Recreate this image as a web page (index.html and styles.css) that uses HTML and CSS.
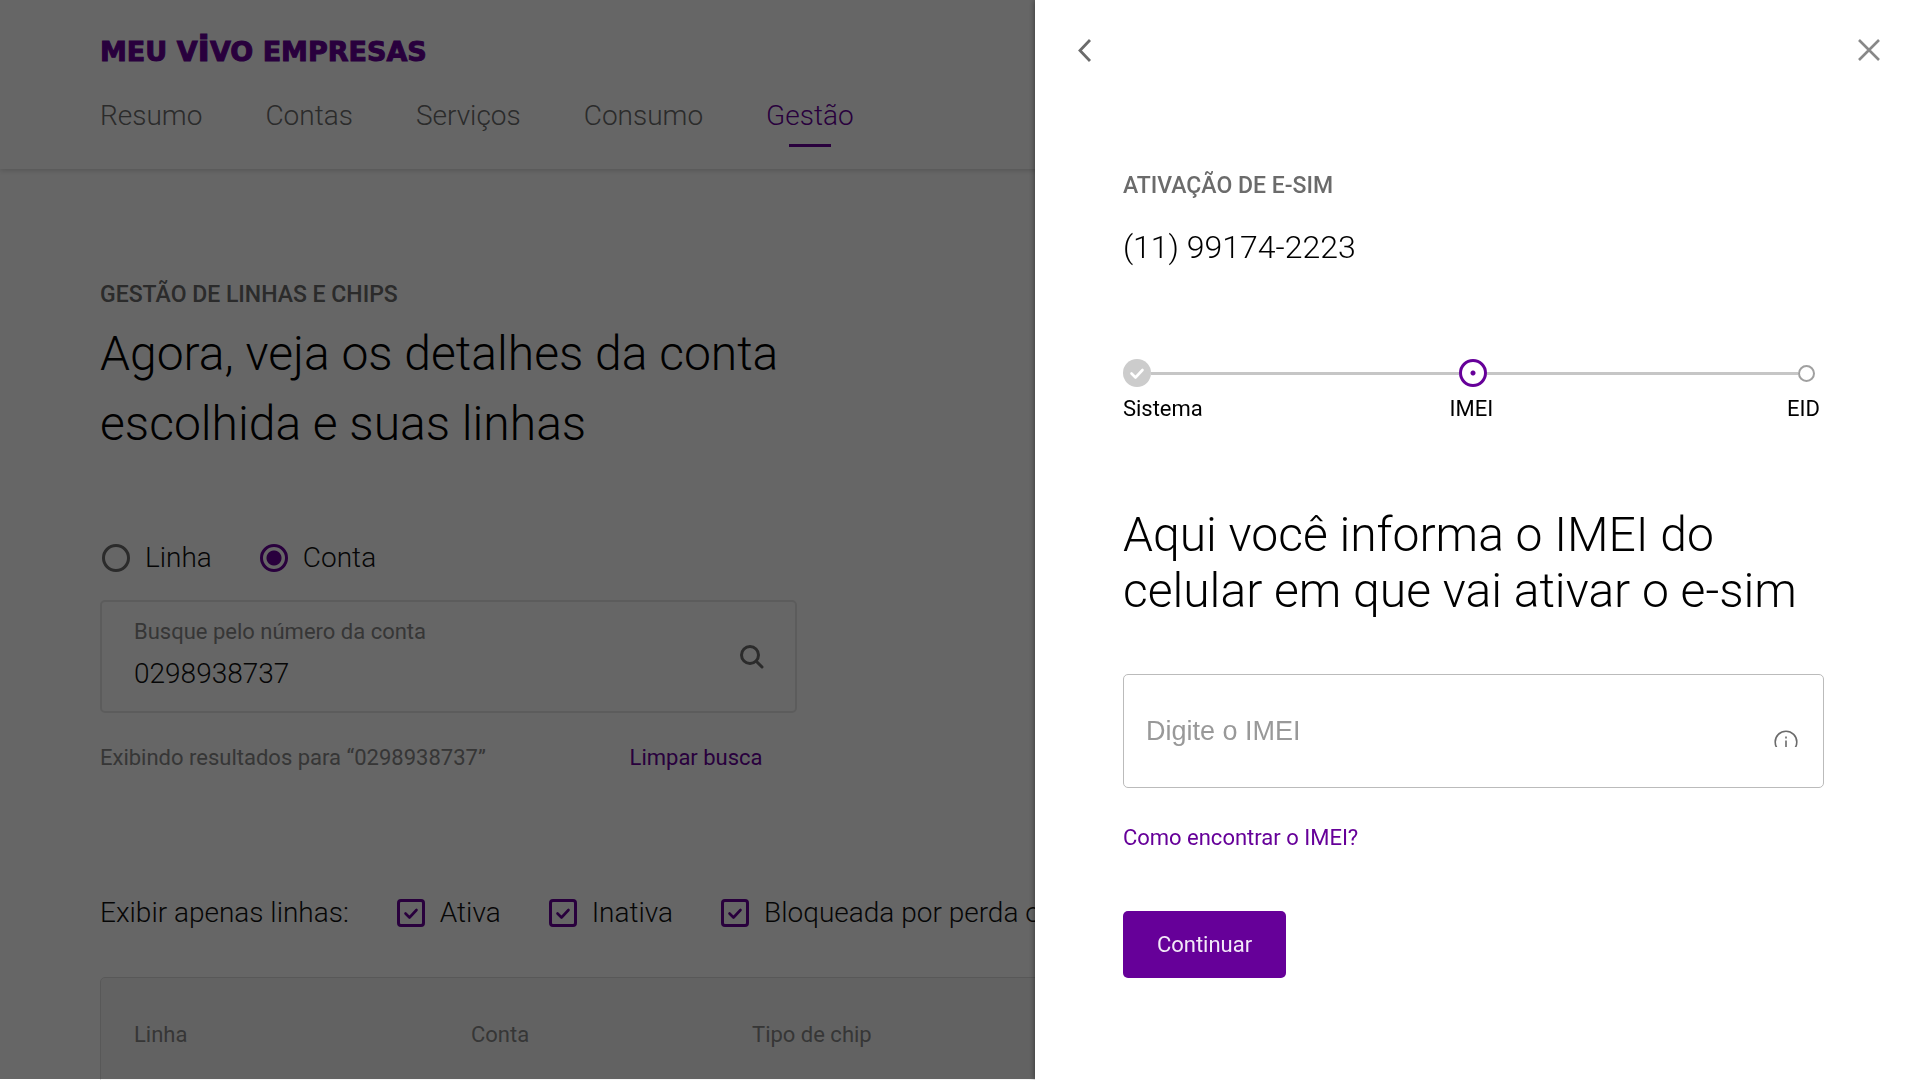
FILE: index.html
```html
<!DOCTYPE html>
<html lang="pt-BR">
<head>
  <meta charset="utf-8">
  <meta name="viewport" content="width=device-width, initial-scale=1">
  <title>Meu Vivo Empresas</title>
  <link rel="stylesheet" href="styles.css">
</head>
<body>
<div class="page">
  <header class="header">
    <a class="logo" href="#">MEU V<span class="logo-i">i</span>VO EMPRESAS</a>
    <nav class="nav">
      <a href="#">Resumo</a>
      <a href="#">Contas</a>
      <a href="#">Serviços</a>
      <a href="#">Consumo</a>
      <a href="#" class="active">Gestão</a>
    </nav>
  </header>

  <main class="main">
    <p class="eyebrow">GESTÃO DE LINHAS E CHIPS</p>
    <h1>Agora, veja os detalhes da conta<br>escolhida e suas linhas</h1>

    <div class="options">
      <label><input type="radio" name="type"> Linha</label>
      <label><input type="radio" name="type" checked> Conta</label>
    </div>

    <div class="search">
      <div class="search-box">
        <div class="search-field">
          <label for="search">Busque pelo número da conta</label>
          <input id="search" type="text" value="0298938737">
        </div>
        <button class="icon-button" aria-label="Buscar">
          <svg width="26" height="26" viewBox="0 0 26 26" fill="none" stroke="currentColor" stroke-width="3" stroke-linecap="round">
            <circle cx="11" cy="11" r="8.5"/>
            <path d="M17.5 17.5L23 23"/>
          </svg>
        </button>
      </div>
      <div class="search-info">
        <span>Exibindo resultados para “0298938737”</span>
        <a href="#">Limpar busca</a>
      </div>
    </div>

    <div class="filters">
      <span>Exibir apenas linhas:</span>
      <label><input type="checkbox" checked> Ativa</label>
      <label><input type="checkbox" checked> Inativa</label>
      <label><input type="checkbox" checked> Bloqueada por perda ou roubo</label>
    </div>

    <div class="table-box">
      <table>
        <thead>
          <tr>
            <th class="col-line">Linha</th>
            <th class="col-account">Conta</th>
            <th>Tipo de chip</th>
          </tr>
        </thead>
      </table>
    </div>
  </main>
</div>

<div class="overlay"></div>

<aside class="drawer">
  <div class="drawer-bar">
    <button class="icon-button" aria-label="Voltar">
      <svg width="24" height="24" viewBox="0 0 24 24" fill="none" stroke="currentColor" stroke-width="2.8">
        <path d="M17 2L7 12.5L17 23"/>
      </svg>
    </button>
    <button class="icon-button close" aria-label="Fechar">
      <svg width="24" height="24" viewBox="0 0 24 24" fill="none" stroke="currentColor" stroke-width="2.6">
        <path d="M2 2L22 22M22 2L2 22"/>
      </svg>
    </button>
  </div>

  <div class="drawer-content">
    <p class="eyebrow">ATIVAÇÃO DE E-SIM</p>
    <p class="phone">(11) 99174-2223</p>

    <div class="track">
      <div class="track-part">
        <svg class="done" width="28" height="28" viewBox="0 0 28 28" fill="none">
          <circle cx="14" cy="14" r="14" fill="#ccc"/>
          <path d="M8.5 14.5L12.5 18.5L19.5 11" stroke="#fff" stroke-width="2.6" stroke-linecap="round" stroke-linejoin="round"/>
        </svg>
      </div>
      <span class="current"></span>
      <div class="track-part last">
        <span class="next"></span>
      </div>
    </div>
    <ol class="steps">
      <li>Sistema</li>
      <li>IMEI</li>
      <li>EID</li>
    </ol>

    <h2>Aqui você informa o IMEI do<br>celular em que vai ativar o e-sim</h2>

    <div class="imei">
      <input type="text" placeholder="Digite o IMEI" aria-label="Digite o IMEI">
      <svg class="info" width="24" height="17" viewBox="0 0 24 17" fill="none" stroke="#6b6b6b" stroke-width="1.6">
        <circle cx="12" cy="12" r="10.8"/>
        <path d="M12 10.5V18M12 6.5V8.5"/>
      </svg>
    </div>
    <a class="help" href="#">Como encontrar o IMEI?</a>
    <button class="continue">Continuar</button>
  </div>
</aside>
</body>
</html>
```
FILE: styles.css
```css
* {
  box-sizing: border-box;
}

body {
  margin: 0;
  font-family: Roboto, "Liberation Sans", sans-serif;
  font-size: 22px;
  line-height: 28px;
  color: #000;
}

h1, h2, p, ol {
  margin: 0;
  padding: 0;
}

a {
  color: #660099;
  text-decoration: none;
}

button, input {
  font: inherit;
}

.page {
  height: 100vh;
  overflow: hidden;
}

.header {
  padding: 36px 100px 22px;
  box-shadow: 0 1px 6px rgba(0, 0, 0, 0.2);
}

.logo {
  display: block;
  height: 32px;
  font-family: "DejaVu Sans", sans-serif;
  font-size: 27px;
  font-weight: bold;
  line-height: 32px;
  -webkit-text-stroke: 1px #660099;
}

.logo-i {
  font-size: 36px;
  line-height: 0;
}

.nav {
  display: flex;
  gap: 63px;
  margin-top: 32px;
  font-size: 28px;
  font-weight: 300;
  line-height: 32px;
}

.nav a {
  padding-bottom: 15px;
  color: #6b6b6b;
}

.nav a.active {
  position: relative;
  color: #660099;
}

.nav a.active::after {
  content: '';
  position: absolute;
  bottom: 0;
  left: calc(50% - 21px);
  width: 42px;
  height: 3px;
  background: #660099;
}

.main {
  padding: 112px 100px 0;
}

.eyebrow {
  font-size: 23px;
  font-weight: 500;
  color: #6b6b6b;
}

h1, h2 {
  font-size: 48px;
  font-weight: 300;
}

h1 {
  margin-top: 10px;
  line-height: 70px;
}

.options, .filters {
  display: flex;
  gap: 48px;
  font-size: 28px;
  font-weight: 300;
  line-height: 32px;
  white-space: nowrap;
  color: #111;
}

.options {
  margin-top: 83px;
  padding-left: 2px;
}

.options label, .filters label {
  display: flex;
  align-items: center;
  gap: 15px;
}

.options input, .filters input {
  appearance: none;
  width: 28px;
  height: 28px;
  margin: 0;
  border: 3px solid #6b6b6b;
}

.options input {
  border-radius: 50%;
}

.options input:checked {
  border-color: #660099;
  background: radial-gradient(circle, #660099 7px, transparent 8px);
}

.filters input {
  border-color: #660099;
  border-radius: 4px;
  background: url("data:image/svg+xml,%3Csvg xmlns='http://www.w3.org/2000/svg' viewBox='0 0 22 22' fill='none' stroke='%23660099' stroke-width='2.6' stroke-linecap='round' stroke-linejoin='round'%3E%3Cpath d='M5.5 11.5L9.5 15.5L16.5 8'/%3E%3C/svg%3E");
}

.search {
  width: 40.5%;
  min-width: 560px;
  margin-top: 26px;
}

.search-box {
  display: flex;
  align-items: center;
  justify-content: space-between;
  height: 113px;
  padding: 0 23px 0 32px;
  border: 2px solid #e6e6e6;
  border-radius: 5px;
}

.search-field {
  flex: 1;
  display: flex;
  flex-direction: column;
  gap: 9px;
  padding-bottom: 4px;
}

.search-field label {
  color: #888;
}

.search-field input {
  width: 100%;
  height: 36px;
  padding: 0;
  border: 0;
  outline: 0;
  background: none;
  font-size: 28px;
  font-weight: 300;
  color: #111;
}

.icon-button {
  display: flex;
  align-items: center;
  justify-content: center;
  width: 40px;
  height: 40px;
  padding: 0;
  border: 0;
  background: none;
  color: #6b6b6b;
  cursor: pointer;
}

.search-info {
  display: flex;
  justify-content: space-between;
  margin-top: 31px;
  padding-right: 34px;
  color: #888;
}

.filters {
  margin-top: 125px;
}

.table-box {
  margin-top: 48px;
  padding: 0 33px;
  border: 1px solid #ddd;
  border-radius: 5px;
  background: #f6f6f6;
}

table {
  width: 100%;
  border-collapse: collapse;
  table-layout: fixed;
}

th {
  padding: 43px 0;
  font-weight: 400;
  text-align: left;
  color: #888;
}

.col-line {
  width: 337px;
}

.col-account {
  width: 281px;
}

.overlay {
  position: fixed;
  inset: 0 0 1px;
  background: rgba(0, 0, 0, 0.6);
}

.drawer {
  position: fixed;
  top: 0;
  right: 0;
  bottom: 0;
  width: 46.1%;
  background: #fff;
  box-shadow: 0 0 6px rgba(0, 0, 0, 0.5);
}

.drawer-bar {
  display: flex;
  justify-content: space-between;
  padding: 30px 31px 0 30px;
}

.close {
  color: #888;
}

.drawer-content {
  padding: 102px 96px 0 88px;
}

.phone {
  margin-top: 27px;
  font-size: 32px;
  font-weight: 300;
  line-height: 40px;
}

.track {
  display: grid;
  grid-template-columns: 1fr auto 1fr;
  align-items: center;
  margin-top: 92px;
}

.track-part {
  display: flex;
  align-items: center;
}

.track-part::after {
  content: '';
  flex: 1;
  height: 3px;
  background: #c6c6c6;
}

.track-part.last {
  flex-direction: row-reverse;
  padding-right: 9px;
}

.current {
  width: 28px;
  height: 28px;
  border: 3px solid #660099;
  border-radius: 50%;
  background: radial-gradient(circle, #660099 2px, transparent 3px);
}

.next {
  width: 17px;
  height: 17px;
  border: 2px solid #a0a0a0;
  border-radius: 50%;
}

.steps {
  display: grid;
  grid-template-columns: 1fr auto 1fr;
  margin-top: 8px;
  padding-right: 4px;
  list-style: none;
}

.steps li:last-child {
  text-align: right;
}

h2 {
  margin-top: 84px;
  line-height: 56px;
}

.imei {
  display: flex;
  align-items: center;
  height: 114px;
  margin-top: 55px;
  padding: 0 25px 0 22px;
  border: 1px solid #bbb;
  border-radius: 5px;
}

.imei input {
  flex: 1;
  min-width: 0;
  height: 36px;
  padding: 0;
  border: 0;
  outline: 0;
  font-family: "Liberation Sans", Arial, sans-serif;
  font-size: 27px;
  line-height: 36px;
}

.imei input::placeholder {
  color: #999;
}

.info {
  margin-top: 14px;
}

.help {
  display: block;
  width: fit-content;
  margin-top: 36px;
}

.continue {
  height: 67px;
  margin-top: 59px;
  padding: 0 34px;
  border: 0;
  border-radius: 5px;
  background: #660099;
  color: #f3e9f8;
  cursor: pointer;
}
```
